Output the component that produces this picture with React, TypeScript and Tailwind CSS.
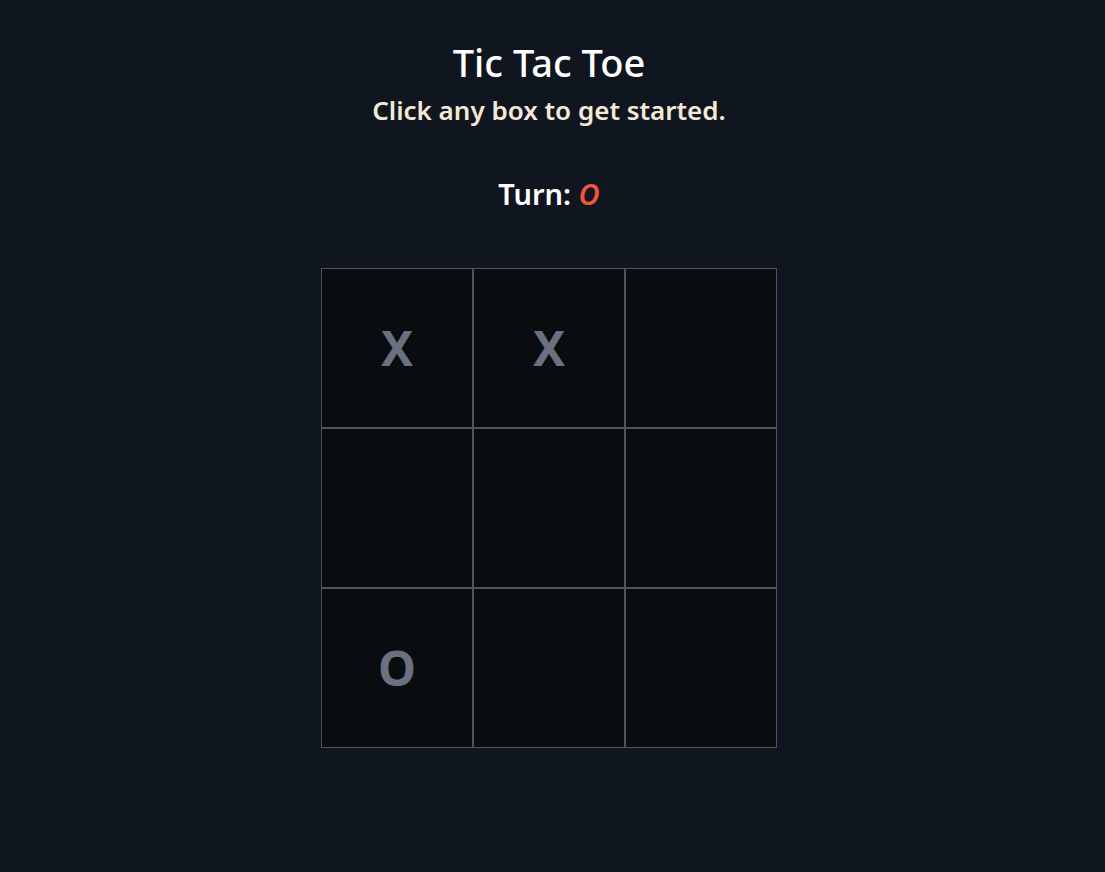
import { useState } from "react";

type Mark = "X" | "O" | null;

export default function App() {
  const [board, setBoard] = useState<Mark[]>(["X", "X", null, null, null, null, "O", null, null]);
  const [turn, setTurn] = useState<"X" | "O">("O");

  const play = (i: number) => {
    if (board[i]) return;
    const next = [...board];
    next[i] = turn;
    setBoard(next);
    setTurn(turn === "X" ? "O" : "X");
  };

  return (
    <div className="min-h-[872px] w-full bg-[#10161f] pr-[7px] font-['Noto_Sans',sans-serif]">
      <div className="flex flex-col items-center pt-[36px]">
        <h1 className="text-[38px] leading-[52px] font-medium text-white">Tic Tac Toe</h1>
        <p className="mt-[4px] text-[26px] leading-[36px] font-semibold text-[#f4e9d6]">Click any box to get started.</p>

        <h2 className="mt-[46px] text-[29px] leading-[40px] font-semibold text-white">
          Turn: <span className="italic text-[#f2553c]">{turn}</span>
        </h2>

        <div className="mt-[54px] grid grid-cols-[repeat(3,152px)] grid-rows-[repeat(3,160px)]">
          {board.map((m, i) => (
            <button
              key={i}
              onClick={() => play(i)}
              className="flex items-center justify-center border border-[#515356] bg-[#0a0d10] text-[48px] font-bold text-[#6b7180]"
            >
              {m}
            </button>
          ))}
        </div>
      </div>
    </div>
  );
}
